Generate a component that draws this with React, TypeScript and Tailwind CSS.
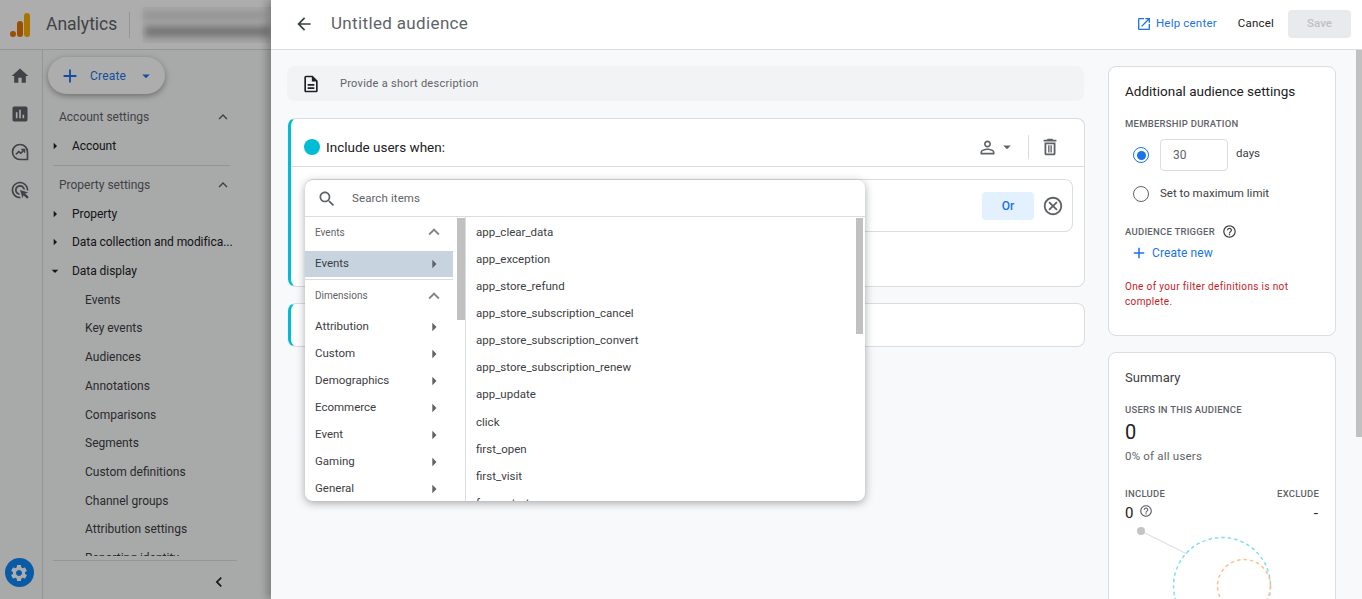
import { ReactNode } from "react";

const font = { fontFamily: "Roboto, sans-serif" };

const paths = {
  home: "M10 20v-6h4v6h5v-8h3L12 3 2 12h3v8z",
  report: "M19 3H5c-1.1 0-2 .9-2 2v14c0 1.1.9 2 2 2h14c1.1 0 2-.9 2-2V5c0-1.1-.9-2-2-2zM9 17H7v-7h2v7zm4 0h-2V7h2v10zm4 0h-2v-4h2v4z",
  adsClick: "M11.71 17.99C8.53 17.84 6 15.22 6 12c0-3.31 2.69-6 6-6 3.22 0 5.84 2.53 5.99 5.71l-2.1-.63C15.48 9.31 13.89 8 12 8c-2.21 0-4 1.79-4 4 0 1.89 1.31 3.48 3.08 3.89l.63 2.1zM22 12c0 .3-.01.6-.04.9l-1.97-.59c.01-.1.01-.21.01-.31 0-4.42-3.58-8-8-8s-8 3.58-8 8 3.58 8 8 8c.1 0 .21 0 .31-.01l.59 1.97c-.3.03-.6.04-.9.04-5.52 0-10-4.48-10-10S6.48 2 12 2s10 4.48 10 10zm-3.77 4.26L22 15l-10-3 3 10 1.26-3.77 4.27 4.27 1.98-1.98-4.28-4.26z",
  settings: "M19.14 12.94c.04-.3.06-.61.06-.94 0-.32-.02-.64-.07-.94l2.03-1.58c.18-.14.23-.41.12-.61l-1.92-3.32c-.12-.22-.37-.29-.59-.22l-2.39.96c-.5-.38-1.03-.7-1.62-.94l-.36-2.54c-.04-.24-.24-.41-.48-.41h-3.84c-.24 0-.43.17-.47.41l-.36 2.54c-.59.24-1.13.57-1.62.94l-2.39-.96c-.22-.08-.47 0-.59.22L2.74 8.87c-.12.21-.08.47.12.61l2.03 1.58c-.05.3-.09.63-.09.94s.02.64.07.94l-2.03 1.58c-.18.14-.23.41-.12.61l1.92 3.32c.12.22.37.29.59.22l2.39-.96c.5.38 1.03.7 1.62.94l.36 2.54c.05.24.24.41.48.41h3.84c.24 0 .44-.17.47-.41l.36-2.54c.59-.24 1.13-.56 1.62-.94l2.39.96c.22.08.47 0 .59-.22l1.92-3.32c.12-.22.07-.47-.12-.61l-2.01-1.58zM12 15.6c-1.98 0-3.6-1.62-3.6-3.6s1.62-3.6 3.6-3.6 3.6 1.62 3.6 3.6-1.62 3.6-3.6 3.6z",
  description: "M8 16h8v2H8zm0-4h8v2H8zm6-10H6c-1.1 0-2 .9-2 2v16c0 1.1.89 2 1.99 2H18c1.1 0 2-.9 2-2V8l-6-6zm4 18H6V4h7v5h5v11z",
  person: "M12 5.9c1.16 0 2.1.94 2.1 2.1s-.94 2.1-2.1 2.1S9.9 9.16 9.9 8s.94-2.1 2.1-2.1m0 9c2.97 0 6.1 1.46 6.1 2.1v1.1H5.9V17c0-.64 3.13-2.1 6.1-2.1M12 4C9.79 4 8 5.79 8 8s1.79 4 4 4 4-1.79 4-4-1.79-4-4-4zm0 9c-2.67 0-8 1.34-8 4v3h16v-3c0-2.66-5.33-4-8-4z",
  trash: "M16 9v10H8V9h8m-1.5-6h-5l-1 1H5v2h14V4h-3.5l-1-1zM18 7H6v12c0 1.1.9 2 2 2h8c1.1 0 2-.9 2-2V7zM10 10h1.5v8H10zM12.5 10H14v8h-1.5z",
  cancel: "M12 2C6.47 2 2 6.47 2 12s4.47 10 10 10 10-4.47 10-10S17.53 2 12 2zm0 18c-4.41 0-8-3.59-8-8s3.59-8 8-8 8 3.59 8 8-3.59 8-8 8zm3.59-13L12 10.59 8.41 7 7 8.41 10.59 12 7 15.59 8.41 17 12 13.41 15.59 17 17 15.59 13.41 12 17 8.41z",
  help: "M11 18h2v-2h-2v2zm1-16C6.48 2 2 6.48 2 12s4.48 10 10 10 10-4.48 10-10S17.52 2 12 2zm0 18c-4.41 0-8-3.59-8-8s3.59-8 8-8 8 3.59 8 8-3.59 8-8 8zm0-14c-2.21 0-4 1.79-4 4h2c0-1.1.9-2 2-2s2 .9 2 2c0 2-3 1.75-3 5h2c0-2.25 3-2.5 3-5 0-2.21-1.79-4-4-4z",
  openNew: "M19 19H5V5h7V3H5c-1.11 0-2 .9-2 2v14c0 1.1.89 2 2 2h14c1.1 0 2-.9 2-2v-7h-2v7zM14 3v2h3.59l-9.83 9.83 1.41 1.41L19 6.41V10h2V3h-7z",
  search: "M15.5 14h-.79l-.28-.27C15.41 12.59 16 11.11 16 9.5 16 5.91 13.09 3 9.5 3S3 5.91 3 9.5 5.91 16 9.5 16c1.61 0 3.09-.59 4.23-1.57l.27.28v.79l5 4.99L20.49 19l-4.99-5zm-6 0C7.01 14 5 11.99 5 9.5S7.01 5 9.5 5 14 7.01 14 9.5 11.99 14 9.5 14z",
  back: "M20 11H7.83l5.59-5.59L12 4l-8 8 8 8 1.41-1.41L7.83 13H20v-2z",
  add: "M19 13h-6v6h-2v-6H5v-2h6V5h2v6h6v2z",
  less: "M12 8l-6 6 1.41 1.41L12 10.83l4.59 4.58L18 14z",
  left: "M15.41 7.41L14 6l-6 6 6 6 1.41-1.41L10.83 12z",
  right: "M10 17l5-5-5-5v10z",
  down: "M7 10l5 5 5-5z",
};

const Icon = ({ d, className }: { d: string; className: string }) => (
  <svg viewBox="0 0 24 24" fill="currentColor" className={`shrink-0 ${className}`}>
    <path d={d} />
  </svg>
);

const NavHead = ({ label, className = "" }: { label: string; className?: string }) => (
  <div className={`flex items-center justify-between pl-[16px] pr-[39px] text-[12px] text-[#5f6368] ${className}`}>
    <span>{label}</span>
    <Icon d={paths.less} className="w-[18px] h-[18px]" />
  </div>
);

const NavParent = ({ label, open }: { label: string; open?: boolean }) => (
  <div className="flex items-center h-[28.73px] pl-[4px] text-[12px] tracking-[-0.05px] text-[#202124] whitespace-nowrap">
    <Icon d={open ? paths.down : paths.right} className="w-[16px] h-[16px] mr-[9px] text-[#202124]" />
    <span>{label}</span>
  </div>
);

const NavChild = ({ label }: { label: string }) => (
  <div className="flex items-center h-[28.73px] pl-[42px] text-[12px] text-[#3c4043]">{label}</div>
);

const Sidebar = () => (
  <div className="relative w-[271px] shrink-0 h-full bg-[#f8f9fa] flex flex-col">
    <div className="h-[50px] bg-white border-b border-[#dadce0] flex items-center shrink-0 overflow-hidden">
      <svg viewBox="0 0 20 24" className="w-[20px] h-[24px] ml-[10px] shrink-0">
        <rect x="14" width="6" height="24" rx="3" fill="#f9ab00" />
        <rect x="7" y="8" width="6" height="16" rx="3" fill="#e37400" />
        <circle cx="3" cy="21" r="3" fill="#e37400" />
      </svg>
      <span className="ml-[16px] w-[71px] text-[17.5px] text-[#5f6368]">Analytics</span>
      <div className="w-px h-[26px] bg-[#dadce0] ml-[12px]" />
      <div className="ml-[13px] flex-1 h-[36px] flex flex-col justify-center gap-[7px] bg-[#f5f5f5]">
        <div className="h-[7px] w-[122px] bg-[#d8d8d8] blur-[3px]" />
        <div className="h-[11px] w-[125px] ml-[2px] bg-[#b0b0b0] blur-[3px]" />
      </div>
    </div>
    <div className="flex flex-1 min-h-0">
      <div className="w-[43px] shrink-0 border-r border-[#dadce0] flex flex-col items-center pr-[3px]">
        <div className="flex flex-col items-center gap-[18px] pt-[16px] text-[#5f6368]">
          <Icon d={paths.home} className="w-[20px] h-[20px]" />
          <Icon d={paths.report} className="w-[20px] h-[20px]" />
          <svg viewBox="0 0 24 24" className="w-[20px] h-[20px]" fill="none" stroke="currentColor" strokeWidth="2">
            <path d="M21 21h-9a9 9 0 1 1 9-9z" />
            <path d="M7 15l3.5-3.5 2.5 2L17 9.5" />
            <path d="M13.5 9H17.5V13" strokeWidth="1.6" />
          </svg>
          <Icon d={paths.adsClick} className="w-[20px] h-[20px]" />
        </div>
        <div className="mt-auto mb-[12px] w-[29px] h-[29px] rounded-full bg-[#0e87f5] flex items-center justify-center text-white ml-[-1px]">
          <Icon d={paths.settings} className="w-[20px] h-[20px]" />
        </div>
      </div>
      <div className="flex-1 min-w-0 flex flex-col pt-[7px] relative">
        <div className="ml-[5px] w-[117px] h-[37px] rounded-full bg-white shadow-[0_2px_6px_rgba(0,0,0,0.35)] flex items-center text-[#1a73e8] shrink-0">
          <Icon d={paths.add} className="w-[22px] h-[22px] ml-[11px]" />
          <span className="ml-[9px] text-[12px] tracking-[0.2px] font-[450]">Create</span>
          <Icon d={paths.down} className="w-[18px] h-[18px] ml-[11px]" />
        </div>
        <NavHead label="Account settings" className="mt-[13px] h-[20px]" />
        <div className="mt-[5px]">
          <NavParent label="Account" />
        </div>
        <div className="h-px bg-[#dadce0] ml-[10px] mr-[41px] mt-[4px]" />
        <NavHead label="Property settings" className="mt-[9px] h-[20px]" />
        <div className="mt-[4.5px] mb-[4.5px] flex-1 min-h-0 overflow-hidden">
          <NavParent label="Property" />
          <NavParent label="Data collection and modifica..." />
          <NavParent label="Data display" open />
          {["Events", "Key events", "Audiences", "Annotations", "Comparisons", "Segments", "Custom definitions", "Channel groups", "Attribution settings", "Reporting identity"].map((l) => (
            <NavChild key={l} label={l} />
          ))}
        </div>
        <div className="h-[39px] shrink-0 ml-[10px] mr-[34px] border-t border-[#dadce0] flex items-center justify-end pr-[8px] text-[#202124]">
          <Icon d={paths.left} className="w-[20px] h-[20px] mt-[4px]" />
        </div>
      </div>
    </div>
    <div className="absolute inset-0 bg-black/[0.32]" />
  </div>
);

const Card = ({ className, children }: { className: string; children: ReactNode }) => (
  <div className={`bg-white border border-[#dadce0] rounded-lg ${className}`}>{children}</div>
);

const Label = ({ children }: { children: ReactNode }) => (
  <div className="text-[9.5px] font-medium tracking-[0.25px] text-[#5f6368] leading-[14px]">{children}</div>
);

const leftItems = ["Attribution", "Custom", "Demographics", "Ecommerce", "Event", "Gaming", "General"];
const rightItems = [
  "app_clear_data",
  "app_exception",
  "app_store_refund",
  "app_store_subscription_cancel",
  "app_store_subscription_convert",
  "app_store_subscription_renew",
  "app_update",
  "click",
  "first_open",
  "first_visit",
  "form_start",
];

const Dropdown = () => (
  <div className="absolute left-[-1px] top-0 w-[560px] h-[321px] bg-white rounded-lg shadow-[0_2px_8px_rgba(60,64,67,0.45)] flex flex-col overflow-hidden z-10">
    <div className="h-[37px] shrink-0 border-b border-[#dadce0] flex items-center pt-[2px]">
      <Icon d={paths.search} className="w-[20px] h-[20px] ml-[12px] text-[#5f6368]" />
      <span className="ml-[15px] text-[11.5px] tracking-[0.1px] text-[#5f6368]">Search items</span>
    </div>
    <div className="flex flex-1 min-h-0">
      <div className="w-[161px] shrink-0 border-r border-[#dadce0] flex">
        <div className="w-[148px] shrink-0 overflow-hidden">
          <div className="h-[34px] flex items-center justify-between pl-[10px] pr-[8px] pb-[4px] text-[10px] text-[#5f6368]">
            <span>Events</span>
            <Icon d={paths.less} className="w-[22px] h-[22px] text-[#80868b]" />
          </div>
          <div className="h-[26px] bg-[#c8d3e0] flex items-center justify-between pl-[10px] pr-[9px] text-[11.5px] text-[#3c4043]">
            <span>Events</span>
            <Icon d={paths.right} className="w-[20px] h-[20px] text-[#5f6368]" />
          </div>
          <div className="h-px bg-[#dadce0] mt-[2px]" />
          <div className="h-[31px] flex items-center justify-between pl-[10px] pr-[8px] text-[10px] text-[#5f6368]">
            <span>Dimensions</span>
            <Icon d={paths.less} className="w-[22px] h-[22px] text-[#80868b]" />
          </div>
          <div className="pt-[2px]">
            {leftItems.map((l) => (
              <div key={l} className="h-[27.1px] flex items-center justify-between pl-[10px] pr-[9px] text-[11.5px] text-[#3c4043]">
                <span>{l}</span>
                <Icon d={paths.right} className="w-[20px] h-[20px] text-[#5f6368]" />
              </div>
            ))}
          </div>
        </div>
        <div className="flex-1 pt-[1px] pl-[4px]">
          <div className="w-[8px] h-[102px] bg-[#c1c1c1]" />
        </div>
      </div>
      <div className="flex-1 min-w-0 flex">
        <div className="flex-1 min-w-0 overflow-hidden pt-[2px]">
          {rightItems.map((l) => (
            <div key={l} className="h-[27.1px] flex items-center pl-[10px] text-[11.5px] text-[#3c4043]">
              {l}
            </div>
          ))}
        </div>
        <div className="w-[9px] pt-[1px]">
          <div className="w-[7px] h-[116px] bg-[#c1c1c1]" />
        </div>
      </div>
    </div>
  </div>
);

const Main = () => (
  <div className="w-[798px] shrink-0">
    <div className="h-[35px] mr-[1px] bg-[#f1f3f4] rounded-lg flex items-center text-[#5f6368]">
      <Icon d={paths.description} className="w-[20px] h-[20px] ml-[14px] text-[#202124]" />
      <span className="ml-[19px] mt-[2px] text-[11px] tracking-[0.27px]">Provide a short description</span>
    </div>
    <div className="mt-[17px] ml-[1px] h-[169px] bg-white border border-[#dadce0] border-l-[3px] border-l-[#00bcd4] rounded-lg">
      <div className="h-[48px] border-b border-[#dadce0] flex items-center pt-[9px]">
        <div className="w-[16px] h-[16px] rounded-full bg-[#00bcd4] ml-[13px]" />
        <span className="ml-[6px] text-[13.5px] font-[450] text-[#202124]">Include users when:</span>
        <Icon d={paths.person} className="w-[21px] h-[21px] ml-auto text-[#5f6368]" />
        <Icon d={paths.down} className="w-[18px] h-[18px] text-[#5f6368]" />
        <div className="w-px h-[24px] bg-[#dadce0] ml-[12px]" />
        <Icon d={paths.trash} className="w-[22px] h-[22px] ml-[10px] mr-[23px] text-[#5f6368]" />
      </div>
      <div className="relative mt-[12px] ml-[14px] mr-[11px] h-[53px] border border-[#dadce0] rounded-lg flex items-center justify-end">
        <Dropdown />
        <div className="w-[52px] h-[28px] rounded bg-[#e3f0fd] flex items-center justify-center text-[12px] font-medium text-[#1a73e8]">Or</div>
        <Icon d={paths.cancel} className="w-[22px] h-[22px] ml-[8px] mr-[8px] text-[#5f6368]" />
      </div>
    </div>
    <div className="mt-[16px] ml-[1px] h-[44px] bg-white border border-[#dadce0] border-l-[3px] border-l-[#00bcd4] rounded-lg" />
  </div>
);

const Side = () => (
  <div className="w-[228px] shrink-0">
    <Card className="h-[270px] px-[16px] pt-[15px]">
      <div className="text-[13.5px] font-[450] text-[#202124] leading-[18px]">Additional audience settings</div>
      <div className="mt-[17px]">
        <Label>MEMBERSHIP DURATION</Label>
      </div>
      <div className="flex items-center mt-[8px] ml-[8px]">
        <div className="w-[16px] h-[16px] rounded-full border border-[#1a73e8] flex items-center justify-center">
          <div className="w-[9px] h-[9px] rounded-full bg-[#1a73e8]" />
        </div>
        <div className="ml-[11px] w-[68px] h-[32px] border border-[#dadce0] rounded flex items-center pl-[12px] text-[12px] text-[#5f6368]">30</div>
        <span className="ml-[8px] -mt-[2px] text-[11.5px] text-[#3c4043]">days</span>
      </div>
      <div className="flex items-center mt-[14px] ml-[8px]">
        <div className="w-[16px] h-[16px] rounded-full border border-[#5f6368]" />
        <span className="ml-[11px] text-[11.5px] text-[#3c4043]">Set to maximum limit</span>
      </div>
      <div className="mt-[22px] flex items-center">
        <Label>AUDIENCE TRIGGER</Label>
        <Icon d={paths.help} className="w-[15px] h-[15px] ml-[7px] text-[#3c4043]" />
      </div>
      <div className="mt-[5px] ml-[5px] flex items-center text-[#1a73e8]">
        <Icon d={paths.add} className="w-[18px] h-[18px]" />
        <span className="ml-[4px] text-[12px] tracking-[0.1px] font-[450]">Create new</span>
      </div>
      <div className="mt-[17px] text-[10px] leading-[15px] tracking-[0.35px] text-[#c5221f]">
        One of your filter definitions is not complete.
      </div>
    </Card>
    <Card className="mt-[16px] h-[400px] px-[16px] pt-[15px]">
      <div className="text-[13px] text-[#3c4043] leading-[20px]">Summary</div>
      <div className="mt-[15px]">
        <Label>USERS IN THIS AUDIENCE</Label>
      </div>
      <div className="mt-[3px] text-[20px] leading-[24px] text-[#202124]">0</div>
      <div className="mt-[4px] text-[11.5px] tracking-[0.2px] text-[#5f6368] leading-[16px]">0% of all users</div>
      <div className="mt-[23px] flex justify-between">
        <Label>INCLUDE</Label>
        <Label>EXCLUDE</Label>
      </div>
      <div className="mt-[2px] flex justify-between items-start h-[20px]">
        <div className="flex items-start">
          <span className="text-[15px] leading-[20px] text-[#202124]">0</span>
          <Icon d={paths.help} className="w-[14px] h-[14px] ml-[6px] mt-[1px] text-[#5f6368]" />
        </div>
        <span className="text-[15px] leading-[20px] text-[#202124] mr-[1px]">-</span>
      </div>
      <svg viewBox="0 0 194 90" className="w-[194px] h-[90px] block" fill="none">
        <line x1="16" y1="8" x2="62" y2="31" stroke="#d9d9d9" />
        <circle cx="16" cy="8" r="4" fill="#c4c4c4" />
        <circle cx="97" cy="63" r="48.5" stroke="#80deea" strokeDasharray="3.5 3" strokeWidth="1.5" />
        <circle cx="119" cy="63" r="26.5" stroke="#ffbf91" strokeDasharray="3.5 3" strokeWidth="1.5" />
      </svg>
    </Card>
  </div>
);

export default function App() {
  return (
    <div className="h-[599px] w-full min-w-[1362px] flex overflow-hidden bg-white" style={font}>
      <Sidebar />
      <div className="relative flex-1 min-w-0 flex flex-col shadow-[-4px_0_8px_rgba(0,0,0,0.25)]">
        <div className="h-[50px] shrink-0 bg-white border-b border-[#dadce0] flex items-center pb-[2px]">
          <Icon d={paths.back} className="w-[20px] h-[20px] ml-[23px] text-[#3c4043]" />
          <span className="ml-[17px] text-[17px] tracking-[0.35px] text-[#5f6368]">Untitled audience</span>
          <Icon d={paths.openNew} className="w-[16px] h-[16px] ml-auto text-[#1a73e8]" />
          <span className="ml-[4px] text-[11.5px] font-[450] tracking-[0.2px] text-[#1a73e8]">Help center</span>
          <span className="ml-[21px] text-[11.5px] font-[450] tracking-[0.2px] text-[#202124]">Cancel</span>
          <div className="ml-[14px] mr-[11px] w-[63px] h-[28px] rounded bg-[#e8eaed] flex items-center justify-center text-[11.5px] font-medium text-[#bdc1c6]">Save</div>
        </div>
        <div className="flex-1 min-h-0 flex bg-[#f8f9fa]">
          <div className="flex-1 min-w-0 flex items-start gap-[23px] pl-[16px] pt-[16px]">
            <Main />
            <Side />
          </div>
          <div className="w-[6px] shrink-0 bg-[#f8f9fa]">
            <div className="h-[387px] bg-[#c1c1c1]" />
          </div>
        </div>
      </div>
    </div>
  );
}
